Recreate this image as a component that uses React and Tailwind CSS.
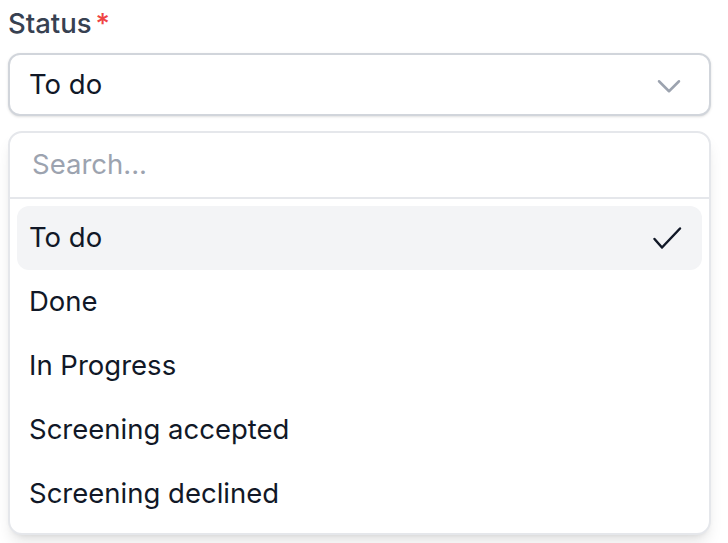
import React from "react";

const options = ["To do", "Done", "In Progress", "Screening accepted", "Screening declined"];

function App() {
  const selected = "To do";

  return (
    <div className="min-h-screen bg-white px-2 pt-[4px] font-['Inter',sans-serif]">
      <div className="w-[703px]">
        {/* Label */}
        <label className="flex items-center text-[27.5px] leading-[38px] font-medium text-[#374151]">
          Status
          <span className="ml-[4px] text-[#ef4444]">*</span>
        </label>

        {/* Select trigger */}
        <button className="mt-[11px] flex h-[63px] w-full items-center justify-between rounded-[12px] border-2 border-[#d1d5db] bg-white pl-[19px] pr-[25px] text-[27.5px] text-[#111827] shadow-sm">
          <span>To do</span>
          <svg width="30" height="30" viewBox="0 0 24 24" fill="none" stroke="#9ca3af" strokeWidth="2" strokeLinecap="round" strokeLinejoin="round">
            <path d="M4 9l8 8 8-8" />
          </svg>
        </button>

        {/* Dropdown */}
        <div className="mt-[15px] overflow-hidden rounded-[14px] border-2 border-[#e5e7eb] bg-white shadow-lg">
          <div className="flex h-[66px] items-center border-b-2 border-[#e5e7eb] px-[22px] text-[27.5px] text-[#9ca3af]">
            Search...
          </div>
          <ul className="p-[7px]">
            {options.map((opt) => (
              <li
                key={opt}
                className={
                  "flex h-[64px] items-center justify-between rounded-[12px] pl-[12px] pr-[20px] text-[27.5px] text-[#111827] " +
                  (opt === selected ? "bg-[#f3f4f6]" : "")
                }
              >
                <span>{opt}</span>
                {opt === selected && (
                  <svg width="30" height="24" viewBox="0 0 30 24" fill="none" stroke="#111827" strokeWidth="2.5" strokeLinecap="round" strokeLinejoin="round">
                    <path d="M2.5 13l7.5 8.5L28 2.5" />
                  </svg>
                )}
              </li>
            ))}
          </ul>
        </div>
      </div>
    </div>
  );
}

export default App;
